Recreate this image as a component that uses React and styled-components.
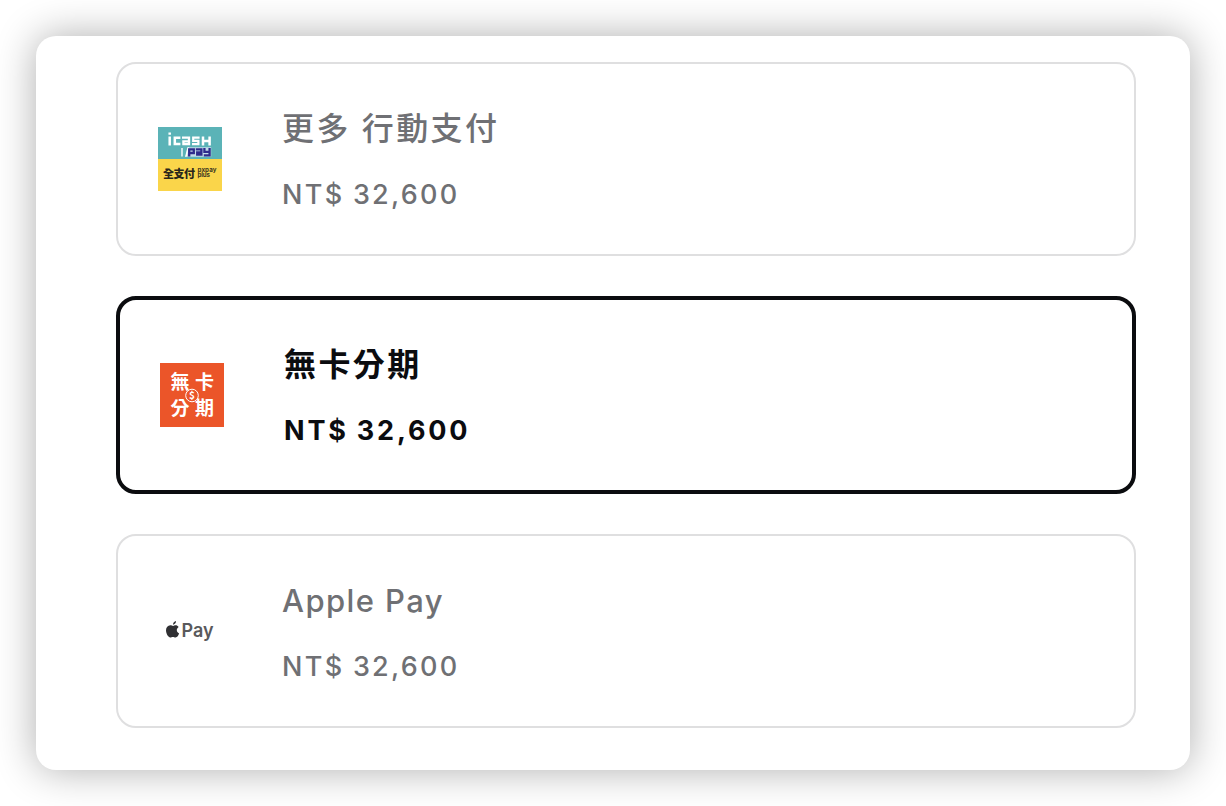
import React from "react"
import styled, { createGlobalStyle } from "styled-components"

const GlobalStyle = createGlobalStyle`
  * {
    box-sizing: border-box;
  }
  body {
    margin: 0;
    background: #fff;
    font-family: Inter, "Noto Sans CJK TC", sans-serif;
  }
`
const Page = styled.main`
  height: 806px;
  padding: 36px;
  overflow: hidden;
`
const Panel = styled.section`
  height: 734px;
  padding: 26px 54px 42px 80px;
  border-radius: 20px;
  background: #fff;
  box-shadow: 0 0 40px rgba(0, 0, 0, 0.32);
`
const Options = styled.ul`
  display: flex;
  flex-direction: column;
  gap: 40px;
  margin: 0;
  padding: 0;
  list-style: none;
`
const Option = styled.li`
  display: flex;
  align-items: center;
  gap: 60px;
  padding: 40px;
  border: ${({ $selected }) => ($selected ? "4px solid #0b0c0f" : "2px solid #dfdfe0")};
  border-radius: 20px;
  color: ${({ $selected }) => ($selected ? "#0b0c0f" : "#6f7074")};
  font-weight: ${({ $selected }) => ($selected ? 700 : 500)};
`
const Info = styled.div`
  display: flex;
  flex-direction: column;
  gap: 22px;
`
const Name = styled.div`
  font-size: ${({ $cjk }) => ($cjk ? "32px" : "31px")};
  line-height: 50px;
  letter-spacing: ${({ $cjk }) => ($cjk ? "2.4px" : "1.4px")};
  font-weight: ${({ $cjk }) => ($cjk ? "inherit" : 450)};
`
const Price = styled.div`
  font-size: 27px;
  line-height: 38px;
  letter-spacing: ${({ $selected }) => ($selected ? "2.8px" : "2.3px")};
  word-spacing: -1px;
  font-weight: ${({ $selected }) => ($selected ? 700 : 450)};
`
const Logo = styled.svg`
  display: block;
  flex: none;
  width: 64px;
  height: 64px;
`

const MobilePayLogo = () => (
  <Logo viewBox="0 0 64 64" fontFamily="Inter, 'Noto Sans CJK TC', sans-serif">
    <rect width="64" height="32" fill="#5bb3b7" />
    <rect y="32" width="64" height="32" fill="#fad54a" />
    {/* icash */}
    <g fill="none" stroke="#fff" strokeWidth="2.5">
      <path d="M11.7 9.4V18.4M11.7 5.6v2.2" />
      <path d="M22.4 10.8h-5.6v6.2h5.6" />
      <path d="M24 10.6h7v6.6h-5.6v-2.9H31" strokeWidth="2.3" />
      <path d="M41.6 10.6h-6.4v3.2h5.2v3.4h-6.4" strokeWidth="2.2" />
      <path d="M45 9.4v9M51.6 9.4v9M45 13.9h6.6" />
      <path d="M24 21v8.6" strokeWidth="1.4" />
    </g>
    {/* pay */}
    <path d="M29.4 20.2H53.2v9.6H27.6z" fill="#c3dcea" />
    <path d="M29.6 20.2h1.6l-2.6 9.6H27z" fill="#fff" />
    <g fill="none" stroke="#2f2c8c" strokeWidth="2.3">
      <path d="M31.2 29.4v-7.1h4.6v3.7h-4.6" />
      <path d="M37.8 22.3h5.6v5.4h-4.2v-2.4h4.2" />
      <path d="M46.4 21.1v3.8h5.2M51.6 21.1v7.2h-5.8" />
    </g>
    <text x="5" y="50.5" fontSize="11" fontWeight="900" fill="#29261b" textLength="32">
      全支付
    </text>
    <g fontSize="6.2" fontWeight="700" fill="#3c361f">
      <text x="39.5" y="45" textLength="19">pxpay</text>
      <text x="39.5" y="50" textLength="12.5">plus</text>
    </g>
  </Logo>
)

const InstallmentLogo = () => (
  <Logo viewBox="0 0 64 64" fontFamily="'Noto Sans CJK TC', sans-serif">
    <rect width="64" height="64" fill="#eb5529" />
    <g fill="#fff" fontSize="19" fontWeight="700">
      <text x="10.5" y="26">無</text>
      <text x="35" y="26">卡</text>
      <text x="10.5" y="52">分</text>
      <text x="35" y="52">期</text>
    </g>
    <circle cx="32" cy="32.5" r="6.3" fill="#eb5529" stroke="#fff" strokeWidth="1" />
    <text x="32" y="36" fontSize="10" fill="#fff" textAnchor="middle">
      $
    </text>
  </Logo>
)

const ApplePayLogo = () => (
  <Logo viewBox="0 0 64 64" fontFamily="Inter, sans-serif">
    <g fill="#303033">
      <path d="M17.7 26.2c-1 0-1.8.7-2.6.7-.8 0-1.7-.6-2.8-.6-2.4.1-4.3 2-4.3 5 0 3.4 2.3 7.2 4.3 7.2.9 0 1.4-.6 2.6-.6s1.5.6 2.6.6c1.7 0 3.1-2.3 3.6-4-1.4-.6-2.3-1.7-2.3-3.4 0-1.4.7-2.4 1.8-3.2-.8-1.1-1.8-1.7-2.9-1.7Z" />
      <path d="M15 25.8c0-2 1.3-3.5 3-3.7.1 2-1.3 3.6-3 3.7Z" />
    </g>
    <text x="23.6" y="38.2" fontSize="18.5" fontWeight="600" fill="#59595c" textLength="32" lengthAdjust="spacingAndGlyphs">
      Pay
    </text>
  </Logo>
)

const payments = [
  { name: "更多 行動支付", price: "NT$ 32,600", Icon: MobilePayLogo, cjk: true },
  { name: "無卡分期", price: "NT$ 32,600", Icon: InstallmentLogo, cjk: true, selected: true },
  { name: "Apple Pay", price: "NT$ 32,600", Icon: ApplePayLogo },
]

const App = () => {
  return (
    <>
      <GlobalStyle />
      <Page>
        <Panel>
          <Options>
            {payments.map(({ name, price, Icon, cjk, selected }) => (
              <Option key={name} $selected={selected}>
                <Icon />
                <Info>
                  <Name $cjk={cjk}>{name}</Name>
                  <Price $selected={selected}>{price}</Price>
                </Info>
              </Option>
            ))}
          </Options>
        </Panel>
      </Page>
    </>
  )
}
export default App
